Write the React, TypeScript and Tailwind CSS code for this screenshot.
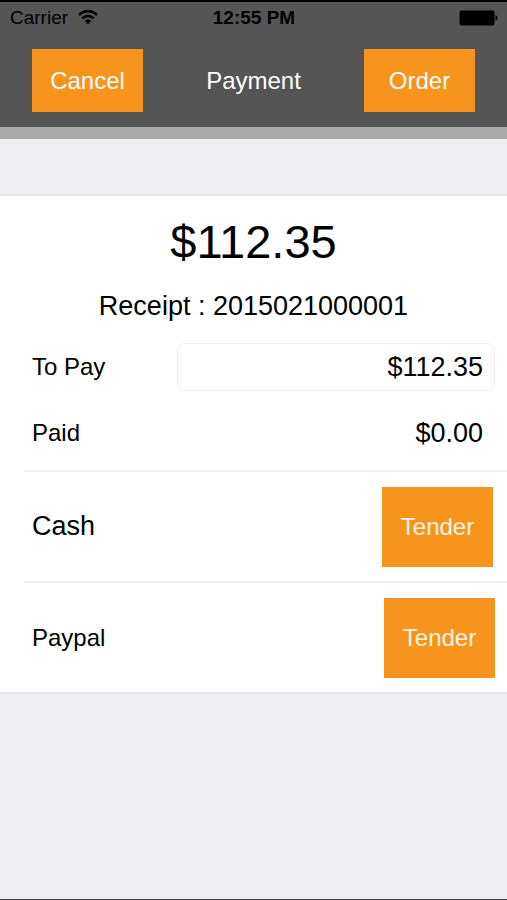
import { useState } from "react";

const tenders = [
  { key: "cash", label: "Cash", labelClass: "text-[27px]", rowClass: "pr-[14px]" },
  { key: "paypal", label: "Paypal", labelClass: "text-2xl", rowClass: "pr-3" },
];

function WifiIcon() {
  return (
    <svg viewBox="0 0 20 16" className="w-5 h-4" aria-hidden="true">
      <g fill="none" stroke="black" strokeWidth="2.4">
        <path d="M1 5C6 -0.1 14 -0.1 19 5" />
        <path d="M4.2 8.4C7.5 5.2 12.5 5.2 15.8 8.4" />
      </g>
      <path d="M6.600 10.800C8.600 9.100 11.400 9.100 13.400 10.800L10 14.300z" fill="black" />
    </svg>
  );
}

function BatteryIcon() {
  return (
    <svg viewBox="0 0 39 16" className="w-[39px] h-4" aria-hidden="true">
      <rect x="0.5" y="0.5" width="35" height="15" rx="2" fill="black" />
      <path d="M36.5 5.2c1.4.4 2 1.5 2 2.8s-.6 2.4-2 2.8z" fill="black" />
    </svg>
  );
}

function StatusBar() {
  return (
    <div className="grid grid-cols-3 items-center h-8 pl-[10px] pr-[9px] text-[19px] text-black">
      <div className="flex items-center gap-[10px]">
        <span>Carrier</span>
        <WifiIcon />
      </div>
      <span className="text-center font-bold whitespace-nowrap">12:55 PM</span>
      <div className="flex justify-end">
        <BatteryIcon />
      </div>
    </div>
  );
}

export default function App() {
  const [amount, setAmount] = useState("$112.35");

  return (
    <div className="min-h-screen flex flex-col bg-[#eeeef3] border-b border-[#444444] font-['Liberation_Sans',Arial,sans-serif] text-black">
      {/* Header */}
      <header className="bg-[#555555] border-t-2 border-t-black border-b-12 border-b-[#aaaaaa]">
        <StatusBar />
        <nav className="flex items-center justify-between px-8 pt-[15px] pb-[15px] text-2xl text-white">
          <button type="button" className="w-[111px] h-[63px] bg-[#f7941e]">
            Cancel
          </button>
          <h1>Payment</h1>
          <button type="button" className="w-[111px] h-[63px] bg-[#f7941e]">
            Order
          </button>
        </nav>
      </header>

      <main className="mt-[55px] bg-white border-t-2 border-b-2 border-[#e4e4e7]">
        {/* Summary */}
        <section className="pt-[18px] pb-[13px]">
          <p className="text-[47px] leading-14 text-center">$112.35</p>
          <p className="mt-[18px] text-[27px] leading-9 text-center">Receipt : 2015021000001</p>
          <div className="mt-[19px] pl-8 pr-3 flex items-center">
            <label htmlFor="to-pay" className="w-[145px] text-2xl">
              To Pay
            </label>
            <input
              id="to-pay"
              value={amount}
              onChange={(e) => setAmount(e.target.value)}
              className="flex-1 min-w-0 h-12 px-[11px] rounded-lg border border-[#f0f0f0] bg-white text-[27px] text-right outline-none"
            />
          </div>
          <div className="mt-[18px] pl-8 pr-6 flex items-center justify-between h-12">
            <span className="text-2xl">Paid</span>
            <span className="text-[27px]">$0.00</span>
          </div>
        </section>

        {/* Tender types */}
        <ul className="ml-6">
          {tenders.map((tender) => (
            <li
              key={tender.key}
              className={`flex items-center justify-between h-[111px] pl-2 border-t-2 border-[#f1f1f3] ${tender.rowClass}`}
            >
              <span className={tender.labelClass}>{tender.label}</span>
              <button
                type="button"
                aria-label={`Tender ${tender.label}`}
                className="w-[111px] h-20 bg-[#f7941e] text-2xl text-[#fff4e4]"
              >
                Tender
              </button>
            </li>
          ))}
        </ul>
      </main>
    </div>
  );
}
